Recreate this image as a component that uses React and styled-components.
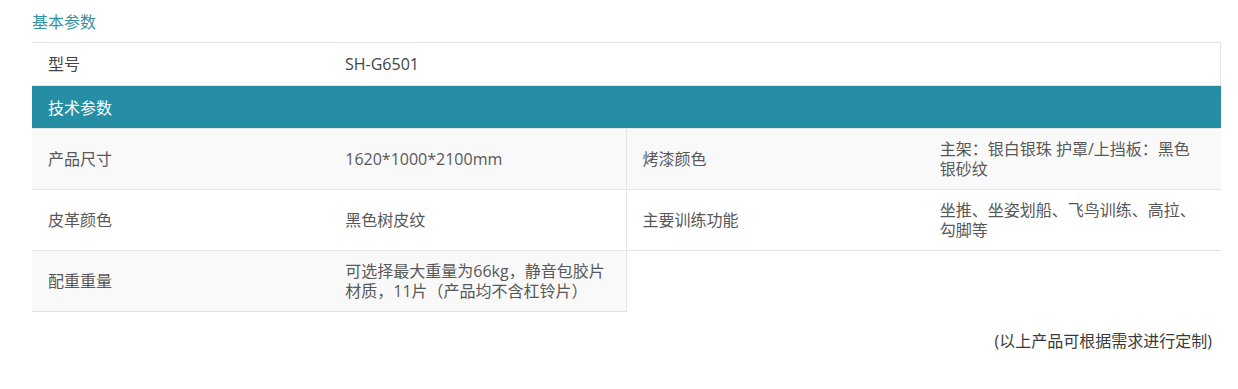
import React from 'react';
import styled, { createGlobalStyle } from 'styled-components';

const GlobalStyle = createGlobalStyle`
  body {
    margin: 0;
    background: #fff;
    font-family: "Open Sans", "Noto Sans CJK SC", sans-serif;
  }
`;

const Page = styled.div`
  padding: 11px 17px 0 32px;
`;

const SectionTitle = styled.div`
  font-size: 16px;
  line-height: 22px;
  color: #3592a4;
  margin-bottom: 9px;
`;

const Table = styled.div`
  display: grid;
  grid-template-columns: repeat(4, 1fr);
`;

const ModelRow = styled.div`
  grid-column: 1 / -1;
  display: grid;
  grid-template-columns: 1fr 3fr;
  height: 42px;
  border: 1px solid #e3e3e3;
  border-left: none;
`;

const Header = styled.div`
  grid-column: 1 / -1;
  height: 42px;
  display: flex;
  align-items: center;
  padding: 0 16px;
  background: #258ea5;
  border-bottom: 1px solid #e6e6e6;
  color: #fff;
  font-size: 16px;
`;

const Cell = styled.div`
  display: flex;
  align-items: center;
  min-height: 60px;
  padding: 0 16px;
  font-size: 16px;
  line-height: 20px;
  color: #585858;
  background: ${(p) => (p.$shade ? '#f9f9f9' : '#fff')};
  border-bottom: 1px solid #e3e3e3;
  border-right: ${(p) => (p.$divider ? '1px solid #e6e6e6' : 'none')};
`;

const ModelCell = styled(Cell)`
  min-height: 0;
  border-bottom: none;
  color: #444;
`;

const Empty = styled.div`
  grid-column: span 2;
`;

const Note = styled.div`
  text-align: right;
  padding: 19px 9px 0 0;
  font-size: 16px;
  line-height: 20px;
  color: #3a3a3a;
`;

const rows = [
  { shade: true, cells: [['产品尺寸', '1620*1000*2100mm'], ['烤漆颜色', '主架：银白银珠 护罩/上挡板：黑色银砂纹']] },
  { shade: false, cells: [['皮革颜色', '黑色树皮纹'], ['主要训练功能', '坐推、坐姿划船、飞鸟训练、高拉、勾脚等']] },
  { shade: true, cells: [['配重重量', '可选择最大重量为66kg，静音包胶片材质，11片（产品均不含杠铃片）']] },
];

const App = () => {
  return (
    <>
      <GlobalStyle />
      <Page>
        <SectionTitle>基本参数</SectionTitle>
        <Table>
          <ModelRow>
            <ModelCell>型号</ModelCell>
            <ModelCell>SH-G6501</ModelCell>
          </ModelRow>
          <Header>技术参数</Header>
          {rows.map((row, i) => (
            <React.Fragment key={i}>
              {row.cells.map(([label, value], j) => (
                <React.Fragment key={j}>
                  <Cell $shade={row.shade}>{label}</Cell>
                  <Cell $shade={row.shade} $divider={j === 0}>{value}</Cell>
                </React.Fragment>
              ))}
              {row.cells.length === 1 && <Empty />}
            </React.Fragment>
          ))}
        </Table>
        <Note>(以上产品可根据需求进行定制)</Note>
      </Page>
    </>
  );
};

export default App;
